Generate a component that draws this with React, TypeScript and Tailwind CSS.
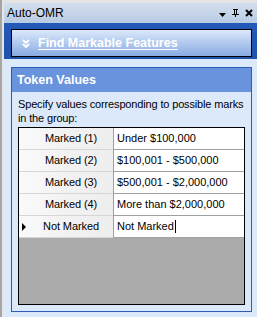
import React from "react";

const rows = [
  { h: "Marked (1)", v: "Under $100,000" },
  { h: "Marked (2)", v: "$100,001 - $500,000" },
  { h: "Marked (3)", v: "$500,001 - $2,000,000" },
  { h: "Marked (4)", v: "More than $2,000,000" },
  { h: "Not Marked", v: "Not Marked", current: true },
];

export default function App() {
  return (
    <div className="w-[257px] h-[317px] flex overflow-hidden font-['Liberation_Sans',Arial,sans-serif] bg-[#e4e4e4]">
      <div className="w-[2px] bg-[#a5a5a5]" />
      <div className="w-[2px] bg-[#e6e6e6]" />
      <div className="flex-1 flex flex-col pt-[3px]">
        {/* title bar */}
        <div className="h-[20px] flex items-center bg-gradient-to-b from-[#d3dfee] to-[#b9cbe2] pl-[3px] pr-[4px]">
          <span className="text-[12px] text-black leading-none">Auto-OMR</span>
          <div className="ml-auto flex items-center gap-[6px]">
            <svg width="7" height="4" viewBox="0 0 7 4" className="mt-[3px]">
              <path d="M0 0h7L3.5 4z" fill="#000" />
            </svg>
            <svg width="7" height="8" viewBox="0 0 7 8">
              <path d="M1 0h5v1H5v4h2v1H4v2H3V6H0V5h2V1H1z M3 1v4h1V1z" fill="#000" fillRule="evenodd" />
            </svg>
            <svg width="8" height="8" viewBox="0 0 8 8">
              <path d="M1 1l6 6M7 1L1 7" stroke="#000" strokeWidth="2" />
            </svg>
          </div>
        </div>
        {/* blue task area */}
        <div className="h-[36px] bg-gradient-to-b from-[#2459b8] to-[#1f52aa] pl-[7px] pr-[5px] pt-[6px]">
          <div className="h-[28px] border border-black bg-gradient-to-b from-[#dbe8fa] to-[#88abe2] flex items-center">
            <svg width="8" height="9" viewBox="0 0 8 9" className="ml-[10px]">
              <path d="M1 1l3 3 3-3M1 5l3 3 3-3" stroke="#fff" strokeWidth="1.8" fill="none" />
            </svg>
            <span className="ml-[8px] text-[12.5px] font-bold text-white underline underline-offset-[2px] leading-none">
              Find Markable Features
            </span>
          </div>
        </div>
        {/* panel */}
        <div className="flex-1 bg-[#dce9fb] pl-[7px] pr-[5px] pt-[8px] pb-[5px] flex">
          <div className="flex-1 border border-[#2c5cb6] flex flex-col">
            <div className="h-[24px] bg-[#6993dc] flex items-center pl-[5px]">
              <span className="text-[12.5px] font-bold text-white leading-none">Token Values</span>
            </div>
            <div className="flex-1 flex flex-col pl-[6px] pr-[4px] pb-[6px]">
              <p className="text-[11px] tracking-[-0.15px] leading-[14px] text-black mt-[5px]">
                Specify values corresponding to possible marks in the group:
              </p>
              <div className="mt-[2px] mr-[2px] flex-1 border border-black bg-[#ababab] flex flex-col">
                {rows.map((r) => (
                  <div key={r.h} className="flex h-[22px]">
                    <div className="w-[94px] flex border-b border-[#d6d6d6] bg-gradient-to-r from-[#fafafa] via-[#f2f2f2] to-[#eeeeee]">
                      <div className="w-[10px] flex items-center justify-center">
                        {r.current && (
                          <svg width="4" height="8" viewBox="0 0 4 8">
                            <path d="M0 0l4 4-4 4z" fill="#000" />
                          </svg>
                        )}
                      </div>
                      <div className="flex-1 flex items-center justify-center text-[11px] tracking-[-0.1px] text-black">
                        {r.h}
                      </div>
                    </div>
                    <div className="w-[1px] bg-[#a0a0a0]" />
                    <div className="flex-1 bg-white border-b border-[#a0a0a0] flex items-center pl-[3px] text-[11px] text-black">
                      {r.v}
                      {r.current && <span className="inline-block w-[1px] h-[13px] bg-black ml-[1px]" />}
                    </div>
                  </div>
                ))}
              </div>
            </div>
          </div>
        </div>
      </div>
    </div>
  );
}
